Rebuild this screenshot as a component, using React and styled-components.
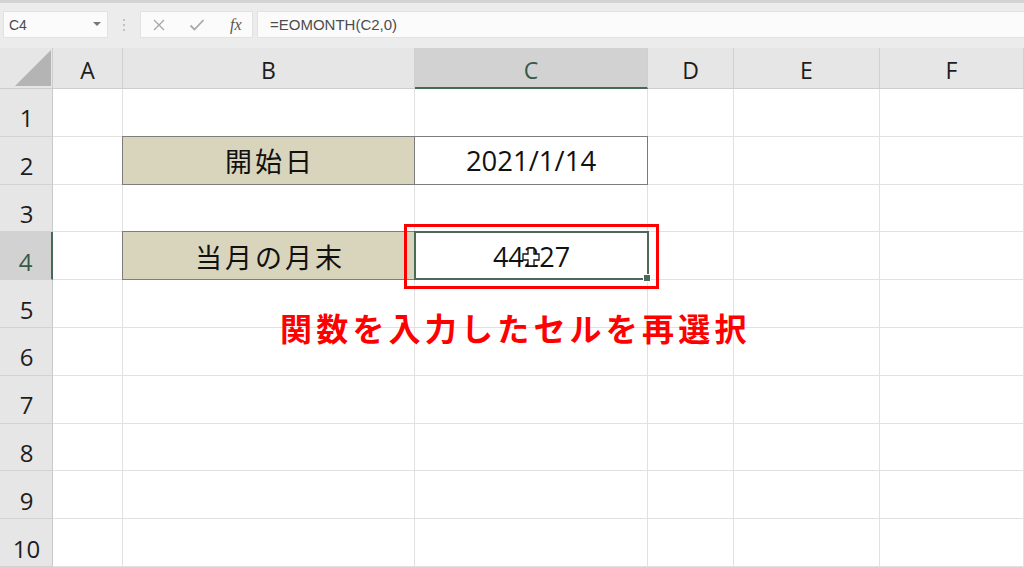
import React from 'react';
import styled, { createGlobalStyle } from 'styled-components';

const GlobalStyle = createGlobalStyle`
  html, body {
    margin: 0;
    padding: 0;
    background: #e9e9e9;
    overflow: hidden;
  }
  * { box-sizing: border-box; }
`;

const Screen = styled.div`
  width: 1024px;
  height: 567px;
  display: flex;
  flex-direction: column;
  background: #e7e7e7;
  font-family: "Open Sans", "Noto Sans CJK JP", sans-serif;
`;

/* ---------- formula bar ---------- */

const FormulaBar = styled.div`
  height: 48px;
  flex-shrink: 0;
  border-top: 3px solid #d3d3d3;
  background: #ececec;
  display: flex;
  align-items: flex-start;
  padding: 8px 0 0 3px;
`;

const NameBox = styled.div`
  width: 105px;
  height: 27px;
  background: #fbfbfb;
  border: 1px solid #e2e2e2;
  display: flex;
  align-items: center;
  justify-content: space-between;
  padding: 0 6px 0 5px;
  font-family: "Liberation Sans", sans-serif;
  font-size: 14px;
  color: #4a4a4a;
`;

const Caret = styled.span`
  width: 0;
  height: 0;
  border-left: 4px solid transparent;
  border-right: 4px solid transparent;
  border-top: 4px solid #777;
  margin-top: -2px;
`;

const Dots = styled.div`
  width: 32px;
  height: 27px;
  display: flex;
  flex-direction: column;
  align-items: center;
  justify-content: center;
  gap: 3px;

  span {
    width: 2px;
    height: 2px;
    border-radius: 1px;
    background: #b5b5b5;
  }
`;

const ButtonBox = styled.div`
  width: 113px;
  height: 27px;
  background: #fbfbfb;
  border: 1px solid #e2e2e2;
  display: flex;
  align-items: center;
  padding: 0 0 0 11px;
  gap: 23px;
`;

const Fx = styled.span`
  font-family: "Liberation Serif", serif;
  font-style: italic;
  font-size: 16px;
  color: #555;
  margin-left: 2px;
`;

const FormulaInput = styled.div`
  flex: 1;
  height: 27px;
  margin-left: 4px;
  background: #fbfbfb;
  border: 1px solid #e2e2e2;
  border-right: none;
  display: flex;
  align-items: center;
  padding-left: 12px;
  font-family: "Liberation Sans", sans-serif;
  font-size: 15px;
  color: #4d4d4d;
`;

/* ---------- sheet ---------- */

const Sheet = styled.div`
  position: relative;
  flex: 1;
  display: grid;
  grid-template-columns: 53px 70px 292px 233px 86px 146px 144px;
  grid-template-rows: 41px repeat(10, 47.8px);
  background: #fff;
  overflow: hidden;
`;

const Corner = styled.div`
  background: #e6e6e6;
  border-right: 1px solid #cdcdcd;
  border-bottom: 1px solid #cdcdcd;
  display: flex;
  align-items: flex-end;
  justify-content: flex-end;
  padding: 0 1px 2px 0;
`;

const ColHead = styled.div`
  background: ${(p) => (p.$active ? '#d2d2d2' : '#e6e6e6')};
  border-right: 1px solid #d0d0d0;
  border-bottom: ${(p) => (p.$active ? '2px solid #456b55' : '1px solid #cdcdcd')};
  color: ${(p) => (p.$active ? '#375a47' : '#1d1d1d')};
  font-size: 23px;
  display: flex;
  align-items: center;
  justify-content: center;
  padding-top: ${(p) => (p.$active ? '4px' : '3px')};
`;

const RowHead = styled.div`
  background: ${(p) => (p.$active ? '#d2d2d2' : '#e6e6e6')};
  border-right: ${(p) => (p.$active ? '2px solid #456b55' : '1px solid #c9c9c9')};
  border-bottom: 1px solid #d2d2d2;
  color: ${(p) => (p.$active ? '#375a47' : '#1d1d1d')};
  font-size: 24px;
  display: flex;
  align-items: center;
  justify-content: center;
  padding-top: 11px;
  padding-left: ${(p) => (p.$active ? '0' : '1px')};
`;

const Cell = styled.div`
  position: relative;
  border-right: 1px solid #e1e1e1;
  border-bottom: 1px solid #e1e1e1;
  display: flex;
  align-items: center;
  justify-content: center;
  color: #111;
`;

const LabelCell = styled(Cell)`
  margin: -1px 0 0 -1px;
  z-index: 1;
  background: #d9d5bd;
  border: 1px solid #7d7d7d;
  font-family: "Noto Sans CJK JP", sans-serif;
  font-size: 27px;
  letter-spacing: 3px;
  padding-top: 1px;
  padding-left: 3px;
`;

const ValueCell = styled(Cell)`
  margin: -1px 0 0 -1px;
  z-index: 1;
  background: #fff;
  border: 1px solid #7d7d7d;
  border-right-color: #5f8a72;
  font-size: 27.5px;
  padding-top: 1px;
`;

const SelectedCell = styled(Cell)`
  margin: -1px -1px 0 -1px;
  z-index: 2;
  background: #fff;
  border: 2px solid #4b6a58;
  font-size: 27px;
  padding-top: 1px;

  &::after {
    content: '';
    position: absolute;
    right: -4px;
    bottom: -4px;
    width: 6px;
    height: 6px;
    background: #4b6a58;
    border: 1px solid #fff;
  }
`;

const CursorWrap = styled.span`
  position: absolute;
  left: 106px;
  top: 14px;
  display: flex;
`;

const Highlight = styled.div`
  position: absolute;
  left: 404px;
  top: 176px;
  width: 255px;
  height: 65px;
  border: 3px solid #ff0000;
  z-index: 3;
  pointer-events: none;
`;

const Note = styled.div`
  position: absolute;
  left: 280px;
  top: 259px;
  z-index: 3;
  font-family: "Noto Sans CJK JP", sans-serif;
  font-weight: 700;
  font-size: 32px;
  line-height: 40px;
  letter-spacing: 4.2px;
  color: #ff0000;
  white-space: nowrap;
`;

const COLS = ['A', 'B', 'C', 'D', 'E', 'F'];

const CrossIcon = () => (
  <svg width="14" height="14" viewBox="0 0 14 14">
    <path d="M2 2 L12 12 M12 2 L2 12" stroke="#a9a9a9" strokeWidth="1.4" fill="none" />
  </svg>
);

const CheckIcon = () => (
  <svg width="16" height="14" viewBox="0 0 16 14">
    <path d="M1.5 7.5 L5.5 11.5 L14.5 2" stroke="#a9a9a9" strokeWidth="1.8" fill="none" />
  </svg>
);

const CornerTriangle = () => (
  <svg width="36" height="36" viewBox="0 0 36 36">
    <path d="M36 0 L36 36 L0 36 Z" fill="#b4b4b4" />
  </svg>
);

const MoveCursor = () => (
  <svg width="18" height="20" viewBox="0 0 18 20">
    <path
      d="M6 1 H12 V7 H17 V13 H12 V19 H6 V13 H1 V7 H6 Z"
      fill="#fff"
      stroke="#111"
      strokeWidth="1.3"
    />
  </svg>
);

const renderCell = (row, col) => {
  const key = `${row}-${col}`;
  if (row === 2 && col === 'B') return <LabelCell key={key}>開始日</LabelCell>;
  if (row === 2 && col === 'C') return <ValueCell key={key}>2021/1/14</ValueCell>;
  if (row === 4 && col === 'B') return <LabelCell key={key}>当月の月末</LabelCell>;
  if (row === 4 && col === 'C')
    return (
      <SelectedCell key={key}>
        44227
        <CursorWrap>
          <MoveCursor />
        </CursorWrap>
      </SelectedCell>
    );
  return <Cell key={key} />;
};

export default function App() {
  const rows = Array.from({ length: 10 }, (_, i) => i + 1);

  return (
    <>
      <GlobalStyle />
      <Screen>
        <FormulaBar>
          <NameBox>
            C4
            <Caret />
          </NameBox>
          <Dots>
            <span />
            <span />
            <span />
          </Dots>
          <ButtonBox>
            <CrossIcon />
            <CheckIcon />
            <Fx>fx</Fx>
          </ButtonBox>
          <FormulaInput>=EOMONTH(C2,0)</FormulaInput>
        </FormulaBar>

        <Sheet>
          <Corner>
            <CornerTriangle />
          </Corner>
          {COLS.map((c) => (
            <ColHead key={`h${c}`} $active={c === 'C'}>
              {c}
            </ColHead>
          ))}
          {rows.map((r) => (
            <React.Fragment key={r}>
              <RowHead $active={r === 4}>{r}</RowHead>
              {COLS.map((c) => renderCell(r, c))}
            </React.Fragment>
          ))}
          <Highlight />
          <Note>関数を入力したセルを再選択</Note>
        </Sheet>
      </Screen>
    </>
  );
}
